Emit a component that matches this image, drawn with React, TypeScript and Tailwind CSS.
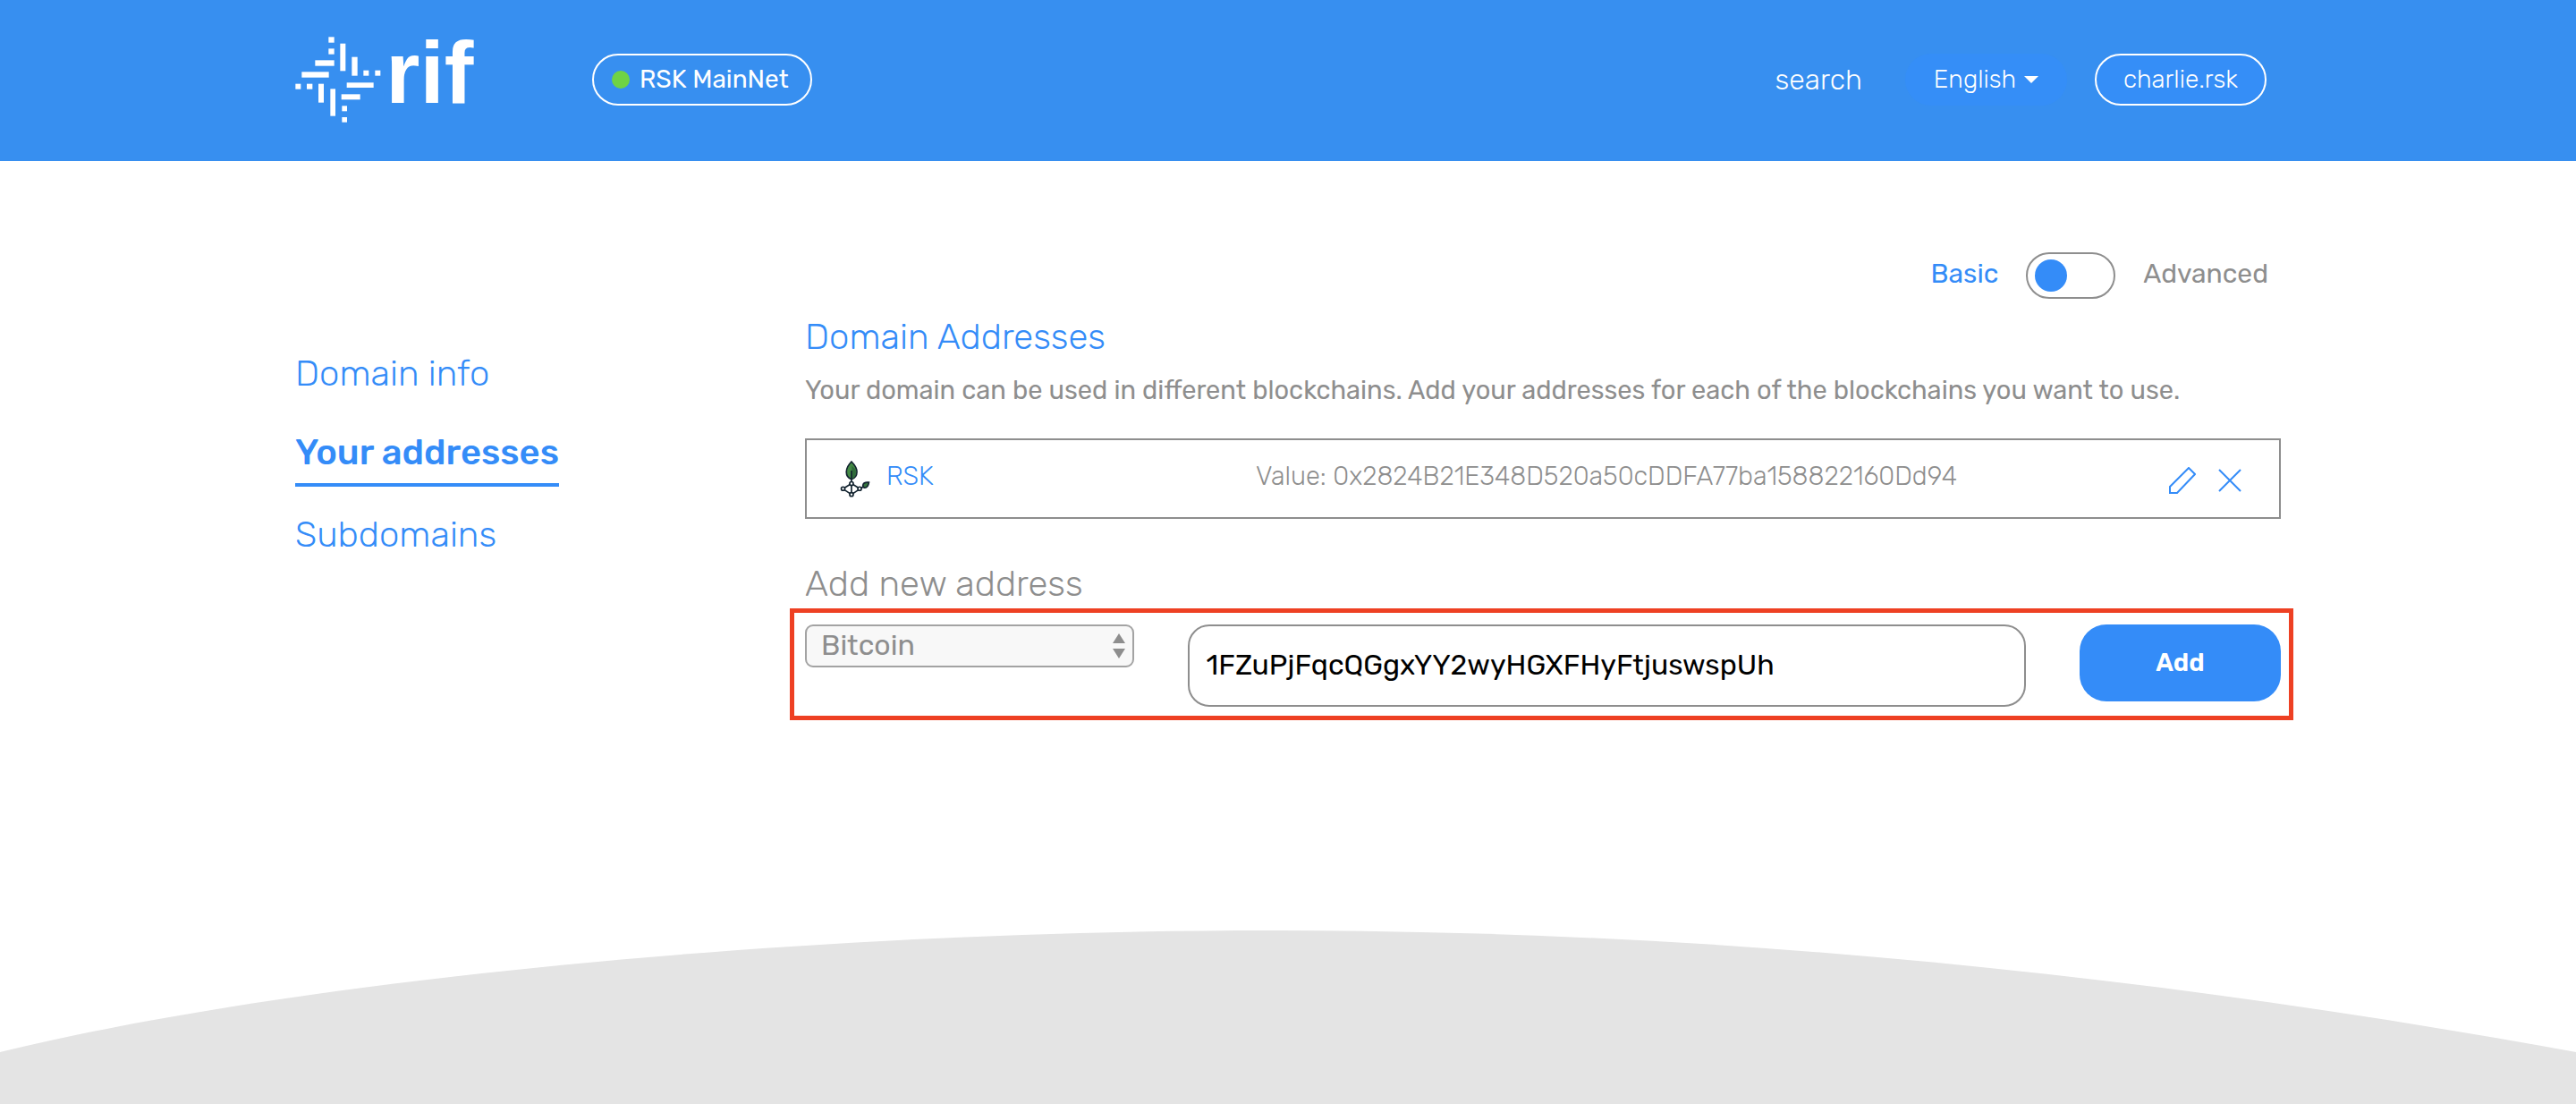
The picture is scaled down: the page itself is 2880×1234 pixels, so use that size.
import { useState } from "react";

const LOGO_BARS: [number, number, number, number][] = [
  [142, 37, 19, 19],
  [142, 76, 19, 19],
  [97, 115, 64, 19],
  [52, 154, 91, 19],
  [31, 194, 18, 18],
  [69, 194, 19, 18],
  [108, 194, 18, 63],
  [148, 211, 17, 91],
  [181, 59, 18, 92],
  [220, 104, 19, 63],
  [259, 149, 18, 18],
  [298, 149, 18, 18],
  [203, 190, 90, 17],
  [185, 229, 63, 18],
  [187, 268, 17, 18],
  [187, 306, 17, 17],
];

function Logo() {
  return (
    <svg viewBox="30 36 600 288" className="h-[96px] w-[200px] overflow-visible" fill="#fff" role="img" aria-label="rif">
      {LOGO_BARS.map(([x, y, w, h]) => (
        <rect key={`${x}-${y}`} x={x} y={y} width={w} height={h} />
      ))}
      <text x="334" y="257" fontSize="294" fontWeight="700" fontFamily="'Liberation Sans', Arial, sans-serif">
        rif
      </text>
    </svg>
  );
}

function RskIcon() {
  return (
    <svg viewBox="28 41 100 122" className="h-[41px] w-[34px]" fill="none" stroke="#12232f" strokeWidth="5" aria-hidden="true">
      <path d="M66 44C56 54 49 66 49 78c0 12 7 21 17 25 10-4 18-13 18-25 0-12-8-24-18-34z" fill="#448a45" />
      <path d="M67 58v44c9-4 15-13 15-24 0-7-6-13-15-20z" fill="#2f6b3b" stroke="none" />
      <path d="M66 74v37M66 123v24M61 120 43 131M71 120l18 11M43 138l18 12M89 138l-18 12M98 132l7-4" />
      <path d="M124 113c-9-1-17 1-19 6-2 5 0 10 4 12 8 1 13-6 15-18z" fill="#37763f" />
      <circle cx="66" cy="117" r="6" fill="#fff" />
      <circle cx="38" cy="134" r="6" fill="#fff" />
      <circle cx="93" cy="134" r="6" fill="#fff" />
      <circle cx="66" cy="153" r="6" fill="#fff" />
    </svg>
  );
}

function PencilIcon() {
  return (
    <svg viewBox="0 0 30 30" className="size-[30px]" fill="none" stroke="currentColor" strokeWidth="2" aria-hidden="true">
      <path d="M1 22 22 1l7 7L9 29H1z" />
    </svg>
  );
}

function CloseIcon() {
  return (
    <svg viewBox="0 0 26 26" className="size-[26px]" fill="none" stroke="currentColor" strokeWidth="2" aria-hidden="true">
      <path d="m1 1 24 24M25 1 1 25" />
    </svg>
  );
}

function Header() {
  return (
    <header className="bg-[#378ff0] text-white">
      <div className="mx-auto flex max-w-[2280px] items-center pt-[41px] pr-[46px] pb-[43px] pl-[30px]">
        <a href="#home">
          <Logo />
        </a>
        <div className="ml-[132px] flex h-[58px] items-center gap-[11px] rounded-full border-2 border-white pr-[24px] pl-[20px] text-[28px]">
          <span className="size-[20px] rounded-full bg-[#6fd344]" />
          <span>RSK MainNet</span>
        </div>
        <nav className="ml-auto flex items-center font-light">
          <a href="#search" className="mr-[48px] text-[32px]">
            search
          </a>
          <button
            type="button"
            aria-haspopup="menu"
            className="mr-[31px] flex h-[58px] items-center gap-[9px] rounded-full bg-[#358ef7] px-[32px] text-[28px]"
          >
            English
            <svg viewBox="0 0 16 8" className="h-[8px] w-[16px]" fill="currentColor" aria-hidden="true">
              <path d="M0 0h16L8 8z" />
            </svg>
          </button>
          <a
            href="#account"
            className="flex h-[58px] items-center rounded-full border-2 border-white bg-[#358ef7] px-[30px] text-[28px]"
          >
            charlie.rsk
          </a>
        </nav>
      </div>
    </header>
  );
}

const LINKS = [
  { label: "Domain info", href: "#info", active: false },
  { label: "Your addresses", href: "#addresses", active: true },
  { label: "Subdomains", href: "#subdomains", active: false },
];

function Sidebar() {
  return (
    <aside className="w-1/4 px-[30px] pt-[214px]">
      <nav>
        <ul className="flex flex-col items-start gap-[30px] text-[40px] leading-[48px] text-[#348cf8]">
          {LINKS.map((link) => (
            <li key={link.label}>
              <a
                href={link.href}
                aria-current={link.active ? "page" : undefined}
                className={
                  link.active
                    ? "block border-b-4 border-[#348cf8] pb-[10px] font-medium"
                    : "block pb-[10px] font-light"
                }
              >
                {link.label}
              </a>
            </li>
          ))}
        </ul>
      </nav>
    </aside>
  );
}

function ModeSwitch() {
  const [advanced, setAdvanced] = useState(false);
  return (
    <div className="flex items-center justify-end gap-[31px] pr-[14px] text-[30px]">
      <span className={advanced ? "pb-1 text-[#8e8e8e]" : "pb-1 text-[#348cf8]"}>Basic</span>
      <button
        type="button"
        role="switch"
        aria-checked={advanced}
        aria-label="Advanced mode"
        onClick={() => setAdvanced(!advanced)}
        className={
          advanced
            ? "flex h-[52px] w-[100px] items-center justify-end rounded-full border-2 border-[#8e8e8e] px-[8px]"
            : "flex h-[52px] w-[100px] items-center rounded-full border-2 border-[#8e8e8e] px-[8px]"
        }
      >
        <span className="size-[36px] rounded-full bg-[#348cf8]" />
      </button>
      <span className={advanced ? "pb-1 text-[#348cf8]" : "pb-1 text-[#8e8e8e]"}>Advanced</span>
    </div>
  );
}

function AddressCard() {
  return (
    <div className="mt-[34px] grid h-[90px] grid-cols-[61fr_139fr] items-center border-2 border-[#8e8e8e] text-[29px] font-light">
      <div className="flex items-center gap-[18px] pl-[37px]">
        <RskIcon />
        <span className="pb-1 text-[#348cf8]">RSK</span>
      </div>
      <div className="flex items-center pr-[42px] text-[#8e8e8e]">
        <span className="pb-1">Value: 0x2824B21E348D520a50cDDFA77ba158822160Dd94</span>
        <div className="ml-auto flex items-center gap-[25px] pt-[4px] text-[#348cf8]">
          <button type="button" aria-label="Edit address">
            <PencilIcon />
          </button>
          <button type="button" aria-label="Remove address">
            <CloseIcon />
          </button>
        </div>
      </div>
    </div>
  );
}

function AddAddressForm() {
  return (
    <form
      onSubmit={(e) => e.preventDefault()}
      className="mt-[3px] -mr-[14px] -ml-[17px] grid grid-cols-12 items-start gap-x-[60px] border-5 border-[#ee4023] pt-[13px] pr-[9px] pb-[10px] pl-[12px]"
    >
      <div className="relative col-span-3">
        <select
          aria-label="Blockchain"
          defaultValue="Bitcoin"
          className="block h-[48px] w-full appearance-none rounded-[9px] border-2 border-[#a3a3a3] bg-[#f8f8f8] pb-[2px] pl-[16px] text-[32px] leading-[40px] text-[#8e8e8e]"
        >
          <option>Bitcoin</option>
          <option>Ethereum</option>
        </select>
        <svg
          viewBox="0 0 14 28"
          className="pointer-events-none absolute top-[10px] right-[10px] h-[28px] w-[14px]"
          fill="#8e8e8e"
          aria-hidden="true"
        >
          <path d="M7 0l7 11H0zM7 28l7-11H0z" />
        </svg>
      </div>
      <input
        type="text"
        aria-label="Address"
        defaultValue="1FZuPjFqcQGgxYY2wyHGXFHyFtjuswspUh"
        className="col-span-7 h-[92px] w-full rounded-[24px] border-2 border-[#8e8e8e] px-[19px] pb-[2px] text-[32px] text-black"
      />
      <button
        type="submit"
        className="col-span-2 h-[86px] rounded-[30px] bg-[#348cf8] text-[28px] font-semibold text-white"
      >
        Add
      </button>
    </form>
  );
}

export default function App() {
  return (
    <div className="flex min-h-screen flex-col bg-white font-['Rubik','Roboto',sans-serif]">
      <Header />
      <main className="mx-auto flex w-full max-w-[2280px]">
        <Sidebar />
        <section className="w-3/4 px-[30px] pt-[102px]">
          <ModeSwitch />
          <h1 className="mt-[19px] text-[40px] leading-[48px] font-light text-[#348cf8]">Domain Addresses</h1>
          <p className="mt-[15px] text-[29px] leading-[40px] text-[#8e8e8e]">
            Your domain can be used in different blockchains. Add your addresses for each of the blockchains you want to
            use.
          </p>
          <AddressCard />
          <h2 className="mt-[49px] text-[40px] leading-[48px] font-light text-[#8e8e8e]">Add new address</h2>
          <AddAddressForm />
        </section>
      </main>
      <footer className="mt-auto">
        <svg
          viewBox="0 0 2880 194"
          preserveAspectRatio="none"
          className="block h-[194px] w-full"
          fill="#e4e4e4"
          aria-hidden="true"
        >
          <path d="M0 136C300 62 860 0 1424 0c520 0 1006 54 1456 136v58H0z" />
        </svg>
      </footer>
    </div>
  );
}
